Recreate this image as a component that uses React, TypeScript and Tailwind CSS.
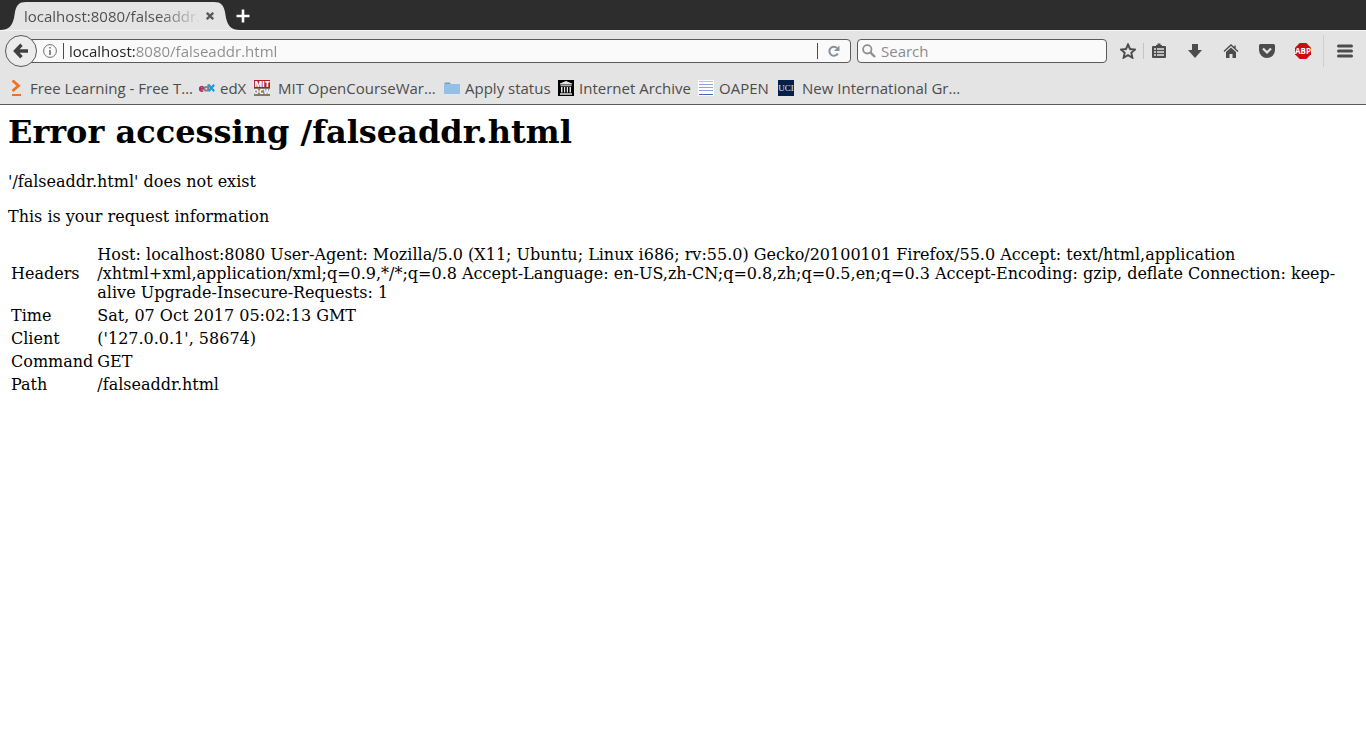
import type { ReactNode } from 'react';

type RowData = { label: string; value: ReactNode };

const rows: RowData[] = [
  {
    label: 'Headers',
    value: (
      <>
        Host: localhost:8080 User-Agent: Mozilla/5.0 (X11; Ubuntu; Linux i686; rv:55.0) Gecko/20100101 Firefox/55.0
        Accept: text/html,application
        <wbr />
        /xhtml+xml,application/xml;q=0.9,*/*;q=0.8 Accept-Language: en-US,zh-CN;q=0.8,zh;q=0.5,en;q=0.3
        Accept-Encoding: gzip, deflate Connection: keep-alive Upgrade-Insecure-Requests: 1
      </>
    ),
  },
  { label: 'Time', value: 'Sat, 07 Oct 2017 05:02:13 GMT' },
  { label: 'Client', value: "('127.0.0.1', 58674)" },
  { label: 'Command', value: 'GET' },
  { label: 'Path', value: '/falseaddr.html' },
];

function PacktIcon() {
  return (
    <svg width="16" height="16" viewBox="0 0 16 16" className="shrink-0" aria-hidden="true">
      <path d="M4.500 0.500L10.500 5.800L4.500 11" fill="none" stroke="#f37021" strokeWidth="2.800" />
      <rect x="4" y="14" width="9" height="2" fill="#f37021" />
    </svg>
  );
}

function EdxIcon() {
  return (
    <svg width="16" height="16" viewBox="0 0 16 16" className="shrink-0" aria-hidden="true">
      <g fill="none" strokeWidth="1.8">
        <path d="M1 8.8h4M5 8.8a2.2 2.2 0 1 0-.8 1.8" stroke="#b52a67" />
        <path d="M9.4 4.2v7M9.2 8.8a1.9 1.9 0 1 0-3.8 0a1.9 1.9 0 0 0 3.8 0" stroke="#7f8083" />
        <path d="M9.6 4.8l5.6 6.4M15.2 4.8l-5.6 6.4" stroke="#1a9ce0" strokeWidth="2.2" />
      </g>
    </svg>
  );
}

function MitIcon() {
  return (
    <svg width="16" height="16" viewBox="0 0 16 16" className="shrink-0" aria-hidden="true">
      <rect width="16" height="8" fill="#b01b22" />
      <rect y="8" width="16" height="8" fill="#85786c" />
      <g fill="#fff" textAnchor="middle" fontWeight="800" fontFamily="Open Sans, sans-serif">
        <text x="8" y="7" fontSize="8">MIT</text>
        <text x="8" y="14" fontSize="7">OCW</text>
      </g>
    </svg>
  );
}

function FolderIcon() {
  return (
    <svg width="16" height="16" viewBox="0 0 16 16" className="shrink-0" aria-hidden="true">
      <path d="M0.500 3.500a1 1 0 0 1 1-1h4a1 1 0 0 1 1 1v1h-6z" fill="#6f9fc4" />
      <path d="M0 4h15a1 1 0 0 1 1 1v8a1 1 0 0 1-1 1H1a1 1 0 0 1-1-1z" fill="#93c0e4" />
    </svg>
  );
}

function ArchiveIcon() {
  return (
    <svg width="16" height="16" viewBox="0 0 16 16" className="shrink-0" aria-hidden="true">
      <rect width="16" height="16" fill="#000" />
      <path d="M8 1l6 2.500v1H2v-1zM2.500 5.200h11v1h-11zM3 7h1.500v5.500H3zM6 7h1.200v5.500H6zM8.800 7H10v5.500H8.800zM11.500 7H13v5.500h-1.500zM2 13.300h12v1.500H2z" fill="#e4e4e4" />
    </svg>
  );
}

function OapenIcon() {
  return (
    <svg width="16" height="16" viewBox="0 0 16 16" className="shrink-0" aria-hidden="true">
      <rect width="16" height="16" fill="#fff" />
      <rect x="1" y="1" width="14" height="1" fill="#f5b94d" />
      <path d="M1 4.500h14M1 7.500h14M1 10.500h14" stroke="#8fa6d0" />
      <path d="M1 14.500h14" stroke="#4866ad" />
    </svg>
  );
}

function UciIcon() {
  return (
    <svg width="16" height="16" viewBox="0 0 16 16" className="shrink-0" aria-hidden="true">
      <rect width="16" height="16" fill="#04204a" />
      <text x="8" y="11" textAnchor="middle" fontSize="9" fill="#e1e6ee" fontFamily="Liberation Serif, serif">
        UCI
      </text>
    </svg>
  );
}

const bookmarks = [
  { label: 'Free Learning - Free T…', icon: <PacktIcon />, width: 'w-[191px]', gap: 'gap-1.5' },
  { label: 'edX', icon: <EdxIcon />, width: 'w-[55px]', gap: 'gap-[5px]' },
  { label: 'MIT OpenCourseWar…', icon: <MitIcon />, width: 'w-[190px]', gap: 'gap-2' },
  { label: 'Apply status', icon: <FolderIcon />, width: 'w-[114px]', gap: 'gap-[5px]' },
  { label: 'Internet Archive', icon: <ArchiveIcon />, width: 'w-[140px]', gap: 'gap-[5px]' },
  { label: 'OAPEN', icon: <OapenIcon />, width: 'w-[80px]', gap: 'gap-[5px]' },
  { label: 'New International Gr…', icon: <UciIcon />, width: 'w-[190px]', gap: 'gap-2' },
];

function TabStrip() {
  return (
    <div className="flex h-[30px] items-end bg-[#2d2d2d]">
      <div className="relative flex h-7 w-60 items-center">
        <svg width="240" height="28" viewBox="0 0 240 28" className="absolute inset-0" aria-hidden="true">
          <path d="M0 28c9 0 12-4 14-12l1-6C16.500 3 19 0 26 0h188c7 0 9.500 3 11 10l1 6c2 8 5 12 14 12z" fill="#e4e4e4" />
        </svg>
        <span className="relative ml-6 w-[178px] overflow-hidden bg-linear-to-r from-[#4c4c4c] from-75% to-transparent bg-clip-text text-[15px] leading-5 whitespace-nowrap text-transparent">
          localhost:8080/falseaddr.html
        </span>
        <button type="button" aria-label="Close tab" className="relative flex size-4 items-center justify-center">
          <svg width="8" height="8" viewBox="0 0 8 8" aria-hidden="true">
            <path d="M0.800 0.800l6.400 6.400M7.200 0.800l-6.400 6.400" stroke="#5a5a5a" strokeWidth="2.400" />
          </svg>
        </button>
      </div>
      <button type="button" aria-label="New tab" className="-ml-1 flex h-7 w-[14px] items-center justify-center">
        <svg width="14" height="14" viewBox="0 0 14 14" className="shrink-0" aria-hidden="true">
          <path d="M7 0.500v13M0.500 7h13" stroke="#fff" strokeWidth="2.600" />
        </svg>
      </button>
    </div>
  );
}

function NavBar() {
  return (
    <div className="flex h-[41px] items-center border-t border-[#f4f4f4] pl-[5px]">
      <button
        type="button"
        aria-label="Back"
        className="relative z-10 flex size-8 shrink-0 items-center justify-center rounded-full border border-[#5a5a5a] bg-[#ececec]"
      >
        <svg width="16" height="16" viewBox="0 0 16 16" aria-hidden="true">
          <path d="M8.500 1.800L2.500 8l6 6.200M2.500 8H15" fill="none" stroke="#404040" strokeWidth="3.400" />
        </svg>
      </button>
      <div className="-ml-2 flex h-6 flex-1 items-center rounded-r-sm border border-[#5a5a5a] bg-[#fafafa] pl-[13px]">
        <svg width="14" height="14" viewBox="0 0 14 14" className="shrink-0" aria-hidden="true">
          <circle cx="7" cy="7" r="6.400" fill="none" stroke="#6e6e6e" />
          <path d="M7 3v1.600M7 6v5" stroke="#6e6e6e" strokeWidth="1.600" />
        </svg>
        <span className="ml-1.5 h-4 w-px bg-[#4c4c4c]" />
        <input
          type="text"
          aria-label="Address"
          defaultValue="localhost:8080/falseaddr.html"
          className="ml-[5px] min-w-0 flex-1 bg-[linear-gradient(90deg,#222_66px,#8c8c8c_66px)] bg-clip-text text-[15px] leading-5 text-transparent caret-black outline-none"
        />
        <span className="h-4 w-px bg-[#4c4c4c]" />
        <button type="button" aria-label="Reload" className="flex w-8 items-center justify-center">
          <svg width="12" height="12" viewBox="0 0 12 12" aria-hidden="true">
            <path d="M9.800 8.500A4.500 4.500 0 1 1 9 3" fill="none" stroke="#84919f" strokeWidth="2" />
            <path d="M11.500 0.500v5.500H6z" fill="#84919f" />
          </svg>
        </button>
      </div>
      <label className="ml-1.5 flex h-6 w-[250px] items-center rounded-sm border border-[#5a5a5a] bg-[#fafafa] pl-1">
        <svg width="14" height="14" viewBox="0 0 14 14" className="shrink-0" aria-hidden="true">
          <circle cx="5.300" cy="5.300" r="4.200" fill="none" stroke="#909090" strokeWidth="1.800" />
          <path d="M8.300 8.300l4.700 4.700" stroke="#909090" strokeWidth="2.400" />
        </svg>
        <input
          type="search"
          aria-label="Search"
          placeholder="Search"
          className="ml-[5px] min-w-0 flex-1 text-[15px] leading-5 outline-none placeholder:text-[#8c8c8c]"
        />
      </label>
      <Toolbar />
    </div>
  );
}

function Toolbar() {
  return (
    <div className="ml-[3px] flex items-center text-[#4c4c4c]">
      <button type="button" aria-label="Bookmark this page" className="flex w-[33px] items-center justify-center pl-[3px]">
        <svg width="16" height="16" viewBox="0 0 16 16" aria-hidden="true">
          <path d="M8 1.500l2 4.500l5 .5l-3.700 3.300l1.100 4.900L8 12.100l-4.400 2.600l1.100-4.900L1 6.500L6 6z" fill="none" stroke="currentColor" strokeWidth="1.900" />
        </svg>
      </button>
      <span className="h-4 w-px bg-[#c4c4c4]" />
      <button type="button" aria-label="Bookmarks list" className="flex w-[33px] items-center justify-center pr-[3px]">
        <svg width="16" height="16" viewBox="0 0 16 16" aria-hidden="true">
          <path d="M5 2h1.500V0.500h3V2H11v1h3a1 1 0 0 1 1 1v10a1 1 0 0 1-1 1H2a1 1 0 0 1-1-1V4a1 1 0 0 1 1-1h3z" fill="currentColor" />
          <path d="M3 6h2M6 6h7M3 9h2M6 9h7M3 12h2M6 12h7" stroke="#e4e4e4" strokeWidth="1.600" />
        </svg>
      </button>
      <button type="button" aria-label="Downloads" className="flex w-9 items-center justify-center">
        <svg width="16" height="16" viewBox="0 0 16 16" aria-hidden="true">
          <path d="M5 1h6v6h4l-7 8L1 7h4z" fill="currentColor" />
        </svg>
      </button>
      <button type="button" aria-label="Home" className="flex w-9 items-center justify-center">
        <svg width="16" height="16" viewBox="0 0 16 16" aria-hidden="true">
          <path d="M1 8.500L8 2l7 6.500M12 2.500v3" fill="none" stroke="currentColor" strokeWidth="1.400" />
          <path d="M3 9l5-4.500L13 9v6H9.500v-4h-3v4H3z" fill="currentColor" />
        </svg>
      </button>
      <button type="button" aria-label="Pocket" className="flex w-9 items-center justify-center">
        <svg width="16" height="16" viewBox="0 0 16 16" aria-hidden="true">
          <path d="M1.500 1h13A1.500 1.500 0 0 1 16 2.500V7A8 8 0 0 1 0 7V2.500A1.500 1.500 0 0 1 1.500 1z" fill="currentColor" />
          <path d="M4 5.500l4 4l4-4" fill="none" stroke="#e4e4e4" strokeWidth="2.200" />
        </svg>
      </button>
      <button type="button" aria-label="Adblock Plus" className="flex w-9 items-center justify-center">
        <svg width="16" height="16" viewBox="0 0 16 16" aria-hidden="true">
          <path d="M4.700 0h6.600L16 4.700v6.600L11.300 16H4.700L0 11.300V4.700z" fill="#c70d0d" />
          <text x="8" y="11" textAnchor="middle" fontSize="8" fontWeight="700" fill="#fff" fontFamily="Open Sans, sans-serif">
            ABP
          </text>
        </svg>
      </button>
      <span className="ml-0.5 h-8 w-px bg-[#cfcfcf]" />
      <button type="button" aria-label="Open menu" className="flex w-[42px] items-center justify-center">
        <svg width="16" height="14" viewBox="0 0 16 14" aria-hidden="true">
          <path d="M1.500 2h13M1.500 7h13M1.500 12h13" stroke="currentColor" strokeWidth="3" strokeLinecap="round" />
        </svg>
      </button>
    </div>
  );
}

export default function App() {
  return (
    <div className="min-h-screen bg-white font-['Open_Sans',sans-serif]">
      <header className="border-b border-[#5a5a5a] bg-[#e4e4e4]">
        <TabStrip />
        <NavBar />
        <nav aria-label="Bookmarks" className="flex h-[33px] items-center pt-px pl-2">
          {bookmarks.map((item) => (
            <a
              key={item.label}
              href="#"
              className={`flex shrink-0 items-center text-[15px] leading-5 whitespace-nowrap text-[#4c4c4c] ${item.width} ${item.gap}`}
            >
              {item.icon}
              {item.label}
            </a>
          ))}
        </nav>
      </header>
      <main className="px-2 pt-[9px] pb-2 font-['DejaVu_Serif',serif] text-base leading-[19px] text-black">
        <h1 className="mb-[21px] text-[32px] leading-[37px] font-bold">Error accessing /falseaddr.html</h1>
        <p className="mb-4">'/falseaddr.html' does not exist</p>
        <p className="mb-4">This is your request information</p>
        <table className="border-separate border-spacing-0.5">
          <tbody>
            {rows.map((row) => (
              <tr key={row.label}>
                <td className="p-px">{row.label}</td>
                <td className="p-px">{row.value}</td>
              </tr>
            ))}
          </tbody>
        </table>
      </main>
    </div>
  );
}
